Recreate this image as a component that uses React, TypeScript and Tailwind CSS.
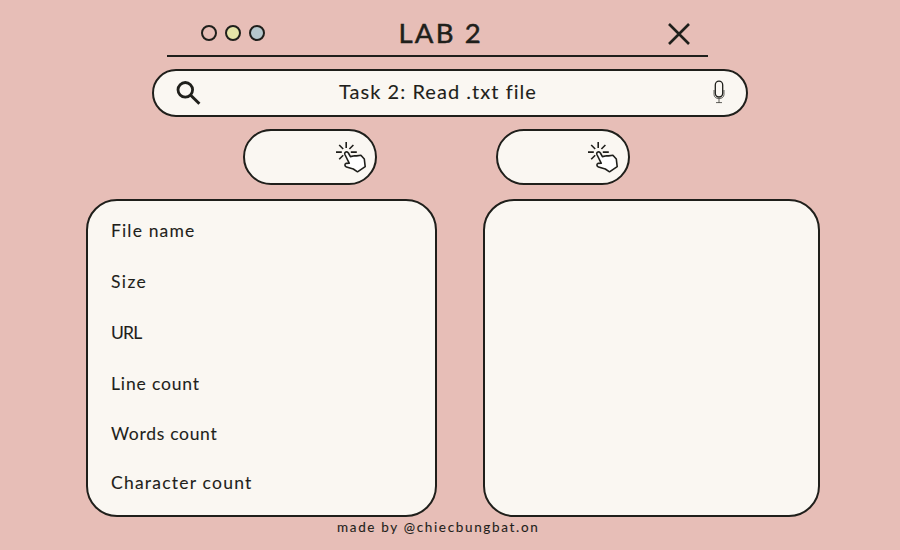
import React from "react";

const labels = [
  { text: "File name", style: "h-[51px] tracking-[1.15px]" },
  { text: "Size", style: "h-[51px] tracking-[1.4px]" },
  { text: "URL", style: "h-[51px] tracking-[-0.8px]" },
  { text: "Line count", style: "h-[50px] tracking-[0.85px]" },
  { text: "Words count", style: "h-[49px] tracking-[0.7px]" },
  { text: "Character count", style: "h-[20px] tracking-[1.22px]" },
];

function ClickIcon() {
  return (
    <svg width="32" height="32" viewBox="0 0 32 32" fill="none" stroke="#1f1f1b" strokeWidth="1.6" strokeLinejoin="round">
      <path d="M11.2 1v6M4.2 4l4 4M18.4 4l-4 4M1 11.1h5.8M15.8 11.1h6M4.2 18.2l4-4" />
      <path
        fill="#fff"
        d="M9.9 13.5c-1-2.5 2.4-3.6 3.5-1.5l2 3.6 4.2-.9 2 .2 4.3-.6 3.4 3.7.9 7.6-7.7 5.2-4.2-2.8-6.8-1.9c-2-1-2-3.2-.6-3.7l3.4-.1z"
      />
    </svg>
  );
}

function UploadPill({ className }: { className: string }) {
  return (
    <button className={`flex h-14 w-[134px] items-center justify-end rounded-full border-2 border-[#1f1f1b] bg-[#faf7f2] ${className}`}>
      <ClickIcon />
    </button>
  );
}

export default function App() {
  return (
    <main className="flex h-[550px] w-[900px] flex-col overflow-hidden bg-[#e7beb7] pt-[10px] font-['Lato',sans-serif] text-[#1f1f1b] [-webkit-text-stroke:0.1px_#1f1f1b]">
      <header className="ml-[167px] flex h-[47px] w-[541px] items-center border-b-2 border-[#1f1f1b] pr-[17px] pl-[33.5px]">
        <div className="mt-px flex gap-2">
          <span className="size-4 rounded-full border-2 border-[#1f1f1b]" />
          <span className="size-4 rounded-full border-2 border-[#1f1f1b] bg-[#e5e4a8]" />
          <span className="size-4 rounded-full border-2 border-[#1f1f1b] bg-[#b5c7cc]" />
        </div>
        <h1 className="ml-[134px] w-[100px] text-[27.5px] leading-none font-normal tracking-[2.2px] whitespace-nowrap [-webkit-text-stroke:0.5px_#1f1f1b]">LAB 2</h1>
        <svg className="mt-[3px] ml-auto" width="24" height="24" viewBox="0 0 24 24" stroke="#1f1f1b" strokeWidth="2.6">
          <path d="M2 2l20 20M22 2L2 22" />
        </svg>
      </header>

      <section className="mt-3 ml-[152px] flex h-12 w-[596px] items-center rounded-full border-2 border-[#1f1f1b] bg-[#faf7f2] pr-[20px] pl-[22px]">
        <svg width="26" height="26" viewBox="0 0 26 26" fill="none" stroke="#1f1f1b">
          <circle cx="9.3" cy="9.8" r="7.3" strokeWidth="2.8" />
          <path d="M14.7 15.2l8.7 8.6" strokeWidth="3" />
        </svg>
        <p className="-mt-[5px] ml-[137px] text-[20px] leading-none tracking-[1.04px] whitespace-nowrap">Task 2: Read .txt file</p>
        <svg className="-mt-[3px] ml-auto" width="14" height="24" viewBox="0 0 14 24" fill="none" stroke="#1f1f1b">
          <rect x="3.3" y="1.2" width="7.4" height="15.8" rx="3.7" strokeWidth="1.3" />
          <path d="M2 10v4.5c0 5.5 10 5.5 10 0V10M7 18.7v4M4 22.6h6" strokeWidth="0.7" />
        </svg>
      </section>

      <div className="mt-3 ml-[243px] flex gap-[119px]">
        <UploadPill className="pr-[8px]" />
        <UploadPill className="pr-[9px]" />
      </div>

      <div className="mt-[14px] ml-[86px] flex gap-[46px]">
        <section className="h-[318px] w-[351px] rounded-[31px] border-2 border-[#1f1f1b] bg-[#faf7f2] pt-[20px] pl-[23px]">
          {labels.map((label) => (
            <p key={label.text} className={`text-[17.5px] leading-[20px] ${label.style}`}>
              {label.text}
            </p>
          ))}
        </section>
        <section className="h-[318px] w-[337px] rounded-[31px] border-2 border-[#1f1f1b] bg-[#faf7f2]" />
      </div>

      <footer className="mt-px ml-[337px] text-[13.5px] leading-[18px] tracking-[1.66px] whitespace-nowrap">made by @chiecbungbat.on</footer>
    </main>
  );
}
